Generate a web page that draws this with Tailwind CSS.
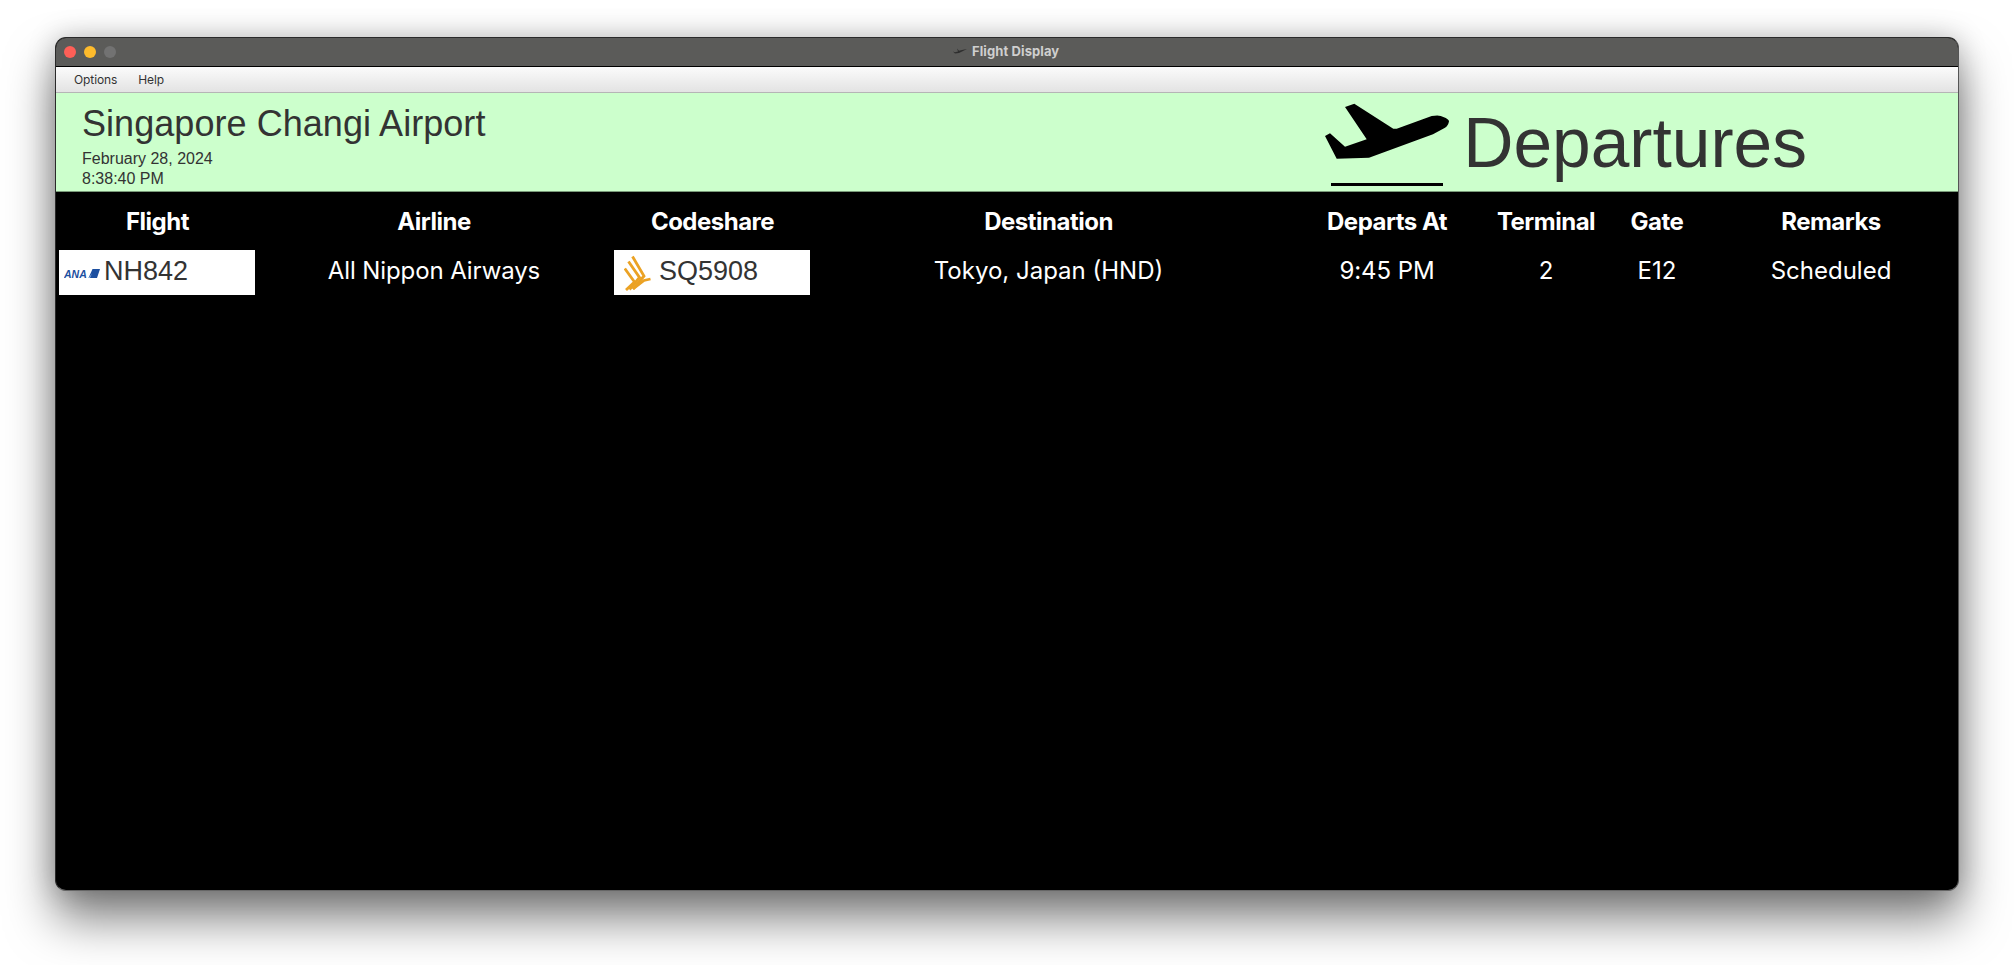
<!DOCTYPE html>
<html lang="en">
<head>
<meta charset="UTF-8">
<title>Flight Display</title>
<script src="https://cdn.jsdelivr.net/npm/@tailwindcss/browser@4"></script>
</head>
<body class="bg-white w-[2014px] h-[965px] overflow-hidden font-['Inter',sans-serif]">
  <div class="pt-[37px] pl-[55px]">
    <div class="w-[1904px] h-[854px] rounded-[11px] overflow-hidden border border-[#2a2a2a] border-r-[#555] border-b-[#666] bg-black flex flex-col shadow-[0_28px_48px_rgba(0,0,0,0.5),0_0_28px_rgba(0,0,0,0.22)]">

      <!-- title bar -->
      <div class="h-[29px] shrink-0 bg-[#5b5b59] border-b border-black flex items-center relative">
        <div class="flex gap-[8px] pl-[8px]">
          <span class="w-[12px] h-[12px] rounded-full bg-[#fe5f57]"></span>
          <span class="w-[12px] h-[12px] rounded-full bg-[#febb2c]"></span>
          <span class="w-[12px] h-[12px] rounded-full bg-[#727272]"></span>
        </div>
        <div class="absolute left-[897px] flex items-center gap-[5px] text-[13px] font-bold tracking-[0.1px] text-[#cfcfcf]">
          <svg width="14" height="8" viewBox="0 0 14 8"><path d="M0 3.500 2 5.500 6 5 9 3.500 14 1 9 2 6 2.800 4 0.500 5 3.400 2 4.200Z" fill="#2e2e2e"/></svg>
          <span>Flight Display</span>
        </div>
      </div>

      <!-- menu bar -->
      <div class="h-[26px] shrink-0 bg-linear-to-b from-[#fbfbfb] to-[#e3e3e3] border-b border-[#b5b5b5] flex items-center gap-[21px] pl-[18px] text-[12px] tracking-[-0.1px] text-[#333]">
        <span>Options</span>
        <span>Help</span>
      </div>

      <!-- airport header -->
      <div class="h-[99px] shrink-0 bg-[#ccffcc] border-b border-[#7a9a7a] flex justify-between font-['Liberation_Sans',sans-serif] text-[#333]">
        <div class="pl-[26px] pt-[10px]">
          <div class="text-[36px] leading-[42px] tracking-[0.05px]">Singapore Changi Airport</div>
          <div class="text-[16px] leading-[20px] mt-[4px]">February 28, 2024</div>
          <div class="text-[16px] leading-[20px]">8:38:40 PM</div>
        </div>
        <div class="flex items-start pr-[151px]">
          <svg class="mt-[8px]" width="125" height="85" viewBox="0 0 125 85">
            <path d="M20 6 29.300 2.700 68.300 27.700 71.700 27.700 106.700 15Q115 13.500 118.300 16 124 18 124 20.500 123 25 120 26.700L108 33.300 44 56.700 11.700 57.700 0 35 5 32.300 20 45.700 41.700 38.300Z" fill="#000"/>
            <rect x="6" y="82" width="112" height="3" fill="#000"/>
          </svg>
          <div class="text-[69.5px] leading-[78px] ml-[13px] mt-[11px]">Departures</div>
        </div>
      </div>

      <!-- flight table -->
      <div class="grid grid-cols-[203px_350px_207px_465px_212px_106px_116px_232px] text-white text-center pt-[15px]">
        <div class="text-[24px] leading-[30px] font-bold tracking-[-0.5px] h-[43px]">Flight</div>
        <div class="text-[24px] leading-[30px] font-bold tracking-[-0.5px]">Airline</div>
        <div class="text-[24px] leading-[30px] font-bold tracking-[-0.5px]">Codeshare</div>
        <div class="text-[24px] leading-[30px] font-bold tracking-[-0.5px]">Destination</div>
        <div class="text-[24px] leading-[30px] font-bold tracking-[-0.5px]">Departs At</div>
        <div class="text-[24px] leading-[30px] font-bold tracking-[-0.5px]">Terminal</div>
        <div class="text-[24px] leading-[30px] font-bold tracking-[-0.5px]">Gate</div>
        <div class="text-[24px] leading-[30px] font-bold tracking-[-0.5px]">Remarks</div>

        <div class="pl-[3px]">
          <div class="w-[196px] h-[45px] bg-white flex items-center text-[#333] text-[27px] font-['Liberation_Sans',sans-serif]">
            <svg class="ml-[5px]" width="36" height="12" viewBox="0 0 36 12">
              <text x="0" y="11" font-family="Liberation Sans" font-size="10.500" font-weight="700" font-style="italic" fill="#1c4fa0">ANA</text>
              <path d="M28.500 2 36 2 33 11 24.500 11Z" fill="#1c4fa0"/>
              <path d="M28 6.500 26 11 24.500 11Z" fill="#8fb0e0"/>
            </svg>
            <span class="ml-[4px] pb-[2px]">NH842</span>
          </div>
        </div>
        <div class="text-[24px] leading-[42px] tracking-[-0.1px]">All Nippon Airways</div>
        <div class="pl-[5px]">
          <div class="w-[196px] h-[45px] bg-white flex items-center text-[#333] text-[27px] font-['Liberation_Sans',sans-serif]">
            <svg class="ml-[10px]" width="27" height="36" viewBox="0 0 27 36" fill="none" stroke="#eba224" stroke-width="2.800">
              <path d="M8.500 1.500 20 21 9 34"/>
              <path d="M4.500 6.500 15.500 22.500 5.500 34.500"/>
              <path d="M0.800 13.500 10.500 27 2 35"/>
              <path d="M9 34 20 25.500 26.500 24"/>
            </svg>
            <span class="ml-[8px] pb-[2px]">SQ5908</span>
          </div>
        </div>
        <div class="text-[24px] leading-[42px]">Tokyo, Japan (HND)</div>
        <div class="text-[24px] leading-[42px] tracking-[-0.1px]">9:45 PM</div>
        <div class="text-[24px] leading-[42px]">2</div>
        <div class="text-[24px] leading-[42px]">E12</div>
        <div class="text-[24px] leading-[42px]">Scheduled</div>
      </div>
    </div>
  </div>
</body>
</html>
